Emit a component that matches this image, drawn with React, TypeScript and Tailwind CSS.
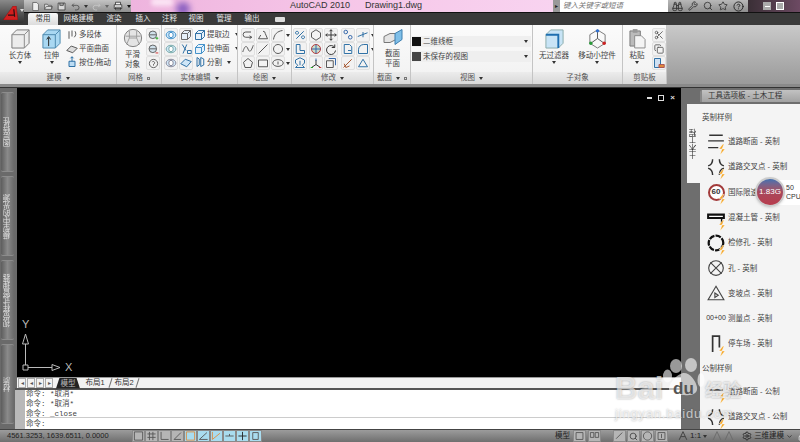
import { ReactNode } from 'react'
import { ChevronDown, Lock, Search, Settings, Star, Wrench, Binoculars, HelpCircle, Scissors, Copy } from 'lucide-react'

// little stroke icon drawn on a 16x16 grid
const G = ({ children, size = 12 }: { children: ReactNode; size?: number }) => (
  <svg width={size} height={size} viewBox="0 0 16 16" fill="none" stroke="#555" strokeWidth="1.3">
    {children}
  </svg>
)

const Caret = ({ className = 'border-t-[#333]' }: { className?: string }) => (
  <span className={`inline-block w-0 h-0 border-x-[2.5px] border-x-transparent border-t-[3px] ${className}`} />
)

// small square ribbon button
const Tool = ({ children, caret }: { children: ReactNode; caret?: boolean }) => (
  <div className="flex items-center h-[14px] gap-[1px]">
    <div className="w-[14px] h-[14px] shrink-0 flex items-center justify-center bg-[#f2f2f2] border border-[#e0e0e0] rounded-[2px]">
      {children}
    </div>
    {caret && <Caret />}
  </div>
)

const Col = ({ children, w }: { children: ReactNode; w?: string }) => (
  <div className={`flex flex-col justify-between py-[3px] shrink-0 ${w ?? ''}`}>{children}</div>
)

const Big = ({ icon, label, w, caret = true }: { icon: ReactNode; label: ReactNode; w: string; caret?: boolean }) => (
  <div className={`flex flex-col items-center pt-[3px] shrink-0 ${w}`}>
    {icon}
    <div className="text-[7.5px] leading-[10px] text-[#444] text-center mt-[2px] whitespace-nowrap">{label}</div>
    {caret && <Caret />}
  </div>
)

const Row = ({ icon, label, caret }: { icon: ReactNode; label: string; caret?: boolean }) => (
  <div className="flex items-center gap-[1px] h-[14px] text-[7.5px] text-[#444] whitespace-nowrap">
    <span className="w-[12px] flex justify-center">{icon}</span>
    {label}
    {caret && <span className="ml-[4px] flex"><Caret /></span>}
  </div>
)

const Panel = ({ w, label, children, arrow = true, launcher, pad = 'px-[2px]' }: { w: string; label: string; children: ReactNode; arrow?: boolean; launcher?: boolean; pad?: string }) => (
  <div className={`flex flex-col border-r border-[#c4c4c4] shrink-0 ${w}`}>
    <div className={`h-[47px] flex overflow-hidden ${pad}`}>{children}</div>
    <div className="h-[12px] flex items-center justify-center gap-[4px] bg-gradient-to-b from-[#ececec] to-[#d9d9d9] text-[7.5px] text-[#555] whitespace-nowrap">
      {label}
      {arrow && <Caret />}
      {launcher && <span className="w-[3px] h-[3px] border border-[#777]" />}
    </div>
  </div>
)

const Ring = ({ c = '#3f8fc9' }: { c?: string }) => (
  <G>
    <ellipse cx="8" cy="8" rx="6.5" ry="5" fill="#cfe6f7" stroke={c} />
    <ellipse cx="8" cy="8" rx="3" ry="3.6" fill="#fff" stroke={c} />
  </G>
)
const Cube = ({ c = '#3f8fc9' }: { c?: string }) => (
  <G>
    <path d="M2 6h8v8H2zM2 6l4-4h8v8l-4 4M10 6l4-4" stroke={c} fill="#e6f1fa" />
  </G>
)
const Shape = ({ d, c }: { d: string; c?: string }) => (
  <G>
    <path d={d} stroke={c ?? '#555'} />
  </G>
)

const Bolt = () => (
  <svg width="8" height="11" viewBox="0 0 8 11" className="absolute right-[-1px] bottom-[-2px]">
    <path d="M5 0 1 5h3L2 11l5-6H4l2-5z" fill="#f5a623" stroke="#fff" strokeWidth="0.4" />
  </svg>
)

const Item = ({ label, icon, bolt = true }: { label: string; icon: ReactNode; bolt?: boolean }) => (
  <div className="h-[25.3px] flex items-center gap-[3px] pl-[7px] shrink-0">
    <div className="relative w-[18px] h-[22px] flex items-center justify-center">
      {icon}
      {bolt && <Bolt />}
    </div>
    <span className="text-[7.5px] text-[#444] whitespace-nowrap">{label}</span>
  </div>
)

const Bar = ({ children, active }: { children: ReactNode; active?: boolean }) => (
  <div className={`w-[13px] h-[12px] shrink-0 flex items-center justify-center border border-[#8a8a8a] ${active ? 'bg-[#a9dcef]' : 'bg-[#b5b5b5]'}`}>
    {children}
  </div>
)

const SideTab = ({ label, h }: { label: string; h: string }) => (
  <div className={`${h} ml-[1px] mr-[3px] mb-[4px] rounded-[2px] border-y border-[#8c8c8c] bg-gradient-to-r from-[#5d5d5d] via-[#8a8a8a] to-[#6a6a6a] flex items-center justify-center shrink-0`}>
    <span className="[writing-mode:vertical-rl] rotate-180 text-[7.5px] leading-none text-[#ddd] whitespace-nowrap">{label}</span>
  </div>
)

const Tab = ({ children, w }: { children: ReactNode; w: string }) => (
  <div className={`${w} text-center text-[7.5px] text-[#e8e8e8] whitespace-nowrap`}>{children}</div>
)

const Slash = () => <span className="w-px h-[10px] bg-[#777] rotate-[18deg]" />

export default function App() {
  return (
    <div className="relative w-[800px] h-[442px] overflow-hidden flex flex-col bg-[#6e6e6e] font-['Liberation_Sans','Noto_Sans_CJK_SC',sans-serif]">
      {/* title bar */}
      <div className="h-[13px] flex border-b border-[#111] shrink-0 text-[9px]">
        <div className="w-[131px] bg-gradient-to-b from-[#c4c4c4] to-[#8f8f8f] flex items-center gap-[4px] pl-[31px]">
          <G size={11}><path d="M3 1h7l3 3v11H3z" fill="#eee" /></G>
          <G size={11}><path d="M1 13V4h5l1 2h6v7zM1 13l3-5h11l-2 5" fill="#ddd" /></G>
          <G size={11}><path d="M2 2h12v12H2zM5 2v4h6V2" fill="#d8d8d8" stroke="#333" /></G>
          <G size={11}><path d="M5 3 2 6l3 3M2 6h8a4 4 0 0 1 0 8H7" stroke="#444" /></G>
          <Caret />
          <G size={11}><path d="M11 3l3 3-3 3M14 6H6a4 4 0 0 0 0 8h3" stroke="#ccc" /></G>
          <Caret className="border-t-[#666]" />
          <G size={12}><path d="M4 6V2h8v4M2 6h12v6H2zM4 10h8v4H4z" fill="#eee" stroke="#333" /></G>
          <Caret className="border-t-[#111]" />
        </div>
        <div className="relative w-[422px] overflow-hidden bg-gradient-to-r from-[#eeb4de] via-[#f6c6e8] to-[#f8d3f0] flex items-center text-[#333] pl-[159px] gap-[15px] whitespace-nowrap">
          <span className="absolute left-[45px] top-[2px] w-[14px] h-[14px] rounded-full bg-[#8a5fc0] blur-[3px]" />
          <span className="absolute left-[20px] top-[-2px] w-[22px] h-[8px] rounded-full bg-[#fbe3f4] blur-[2px]" />
          <span>AutoCAD 2010</span>
          <span>Drawing1.dwg</span>
        </div>
        <div className="w-[7px] bg-[#999] flex items-center justify-center text-[6px] text-[#222]">▸</div>
        <div className="w-[108px] bg-white flex items-center pl-[3px] italic text-[#777] text-[7.5px] whitespace-nowrap">键入关键字或短语</div>
        <div className="w-[80px] bg-gradient-to-b from-[#b8b8b8] to-[#8e8e8e] flex items-center justify-center gap-[5px]">
          <Binoculars size={11} color="#333" />
          <Wrench size={10} color="#333" />
          <Search size={10} color="#333" />
          <Star size={10} color="#333" />
          <HelpCircle size={11} color="#222" />
        </div>
        <div className="flex-1 bg-gradient-to-r from-[#3a2f36] to-[#6d4a63] flex items-center pl-[15px] gap-[5px]">
          <span className="w-[8px] h-[8px] flex items-center justify-center bg-[#aaa]"><span className="w-[5px] h-[1px] bg-white" /></span>
          <span className="w-[8px] h-[8px] bg-[#aaa] border border-white" />
        </div>
      </div>

      {/* ribbon tabs */}
      <div className="h-[12px] bg-[#3a3a3a] flex items-end pl-[28px] shrink-0 leading-[12px]">
        <div className="w-[30px] h-[12px] text-center text-[7.5px] text-[#333] bg-gradient-to-b from-[#f8f8f8] to-[#dcdcdc] rounded-t-[2px]">常用</div>
        <Tab w="w-[39px] ml-[1px]">网格建模</Tab>
        <Tab w="w-[32px]">渲染</Tab>
        <Tab w="w-[26px]">插入</Tab>
        <Tab w="w-[27px]">注释</Tab>
        <Tab w="w-[26px]">视图</Tab>
        <Tab w="w-[30px]">管理</Tab>
        <Tab w="w-[26px]">输出</Tab>
        <div className="ml-[10px] w-[10px] h-[5px] mb-[3px] bg-[#ddd] rounded-[1px]" />
      </div>

      {/* ribbon */}
      <div className="h-[59px] flex shrink-0 bg-gradient-to-b from-[#fbfbfb] to-[#f1f1f1]">
        <Panel w="w-[117px]" label="建模" pad="pl-[3px]">
          <Big w="w-[34px]" label="长方体" icon={
            <svg width="21" height="21" viewBox="0 0 22 22"><path d="M2 7l5-5h13v14l-5 5H2z" fill="#ececec" stroke="#777" /><path d="M2 7h13v14M15 7l5-5" stroke="#888" fill="none" /></svg>
          } />
          <Big w="w-[29px]" label="拉伸" icon={
            <svg width="21" height="21" viewBox="0 0 22 22"><path d="M2 7l5-5h13v14l-5 5H2z" fill="#a9d8f2" stroke="#4a87ad" /><path d="M2 7h13v14M15 7l5-5" stroke="#4a87ad" fill="none" /><path d="M8 19V10M6 12l2-3 2 3" stroke="#222" fill="none" /></svg>
          } />
          <Col>
            <Row icon={<Shape d="M4 3v10M8 2v8M12 3c2 3 1 6-1 8" />} label="多段体" />
            <Row icon={<G><path d="M1 10l6-6 8 3-6 6z" fill="#ddd" /></G>} label="平面曲面" />
            <Row icon={<G><path d="M4 7h8v7H4zM8 7V1M6 3l2-2 2 2" stroke="#2b6ea3" fill="#bcdcf3" /></G>} label="按住/拖动" />
          </Col>
        </Panel>
        <Panel w="w-[45px]" label="网格" arrow={false} launcher>
          <Big w="w-[27px]" caret={false} label={<>平滑<br />对象</>} icon={
            <svg width="20" height="20" viewBox="0 0 22 20"><circle cx="11" cy="10" r="9.5" fill="#e4e4e4" stroke="#777" /><path d="M3 8h16M7 2v8l-3 7M15 2v8l3 7M7 10h8" stroke="#999" fill="none" /></svg>
          } />
          <Col>
            <Tool><G size={11}><circle cx="7" cy="7" r="5.5" fill="#cfe0ea" /><path d="M2 7h10" /><path d="M11 12h4M13 10v4" stroke="#2a2" /></G></Tool>
            <Tool><G size={11}><circle cx="7" cy="7" r="5.5" fill="#cfe0ea" /><path d="M2 7h10" /><path d="M11 13h4" stroke="#c22" /></G></Tool>
            <Tool><G size={11}><circle cx="8" cy="8" r="6" /><path d="M6 6a2 2 0 1 1 2 3v2" /></G></Tool>
          </Col>
        </Panel>
        <Panel w="w-[76px]" label="实体编辑">
          <Col w="w-[15px]"><Tool><Ring /></Tool><Tool><Ring c="#7aa" /></Tool><Tool><Ring c="#889" /></Tool></Col>
          <Col w="w-[15px]">
            <Tool><Cube c="#666" /></Tool>
            <Tool><G><path d="M3 2l5 8M9 2 4 14M10 10h5v4h-5z" stroke="#2b6ea3" /></G></Tool>
            <Tool><G><path d="M1 9l6-6 8 3-6 7z" fill="#cfe6f7" stroke="#2b6ea3" /></G></Tool>
          </Col>
          <Col>
            <Row icon={<Cube c="#2b6ea3" />} label="提取边" caret />
            <Row icon={<Cube />} label="拉伸面" caret />
            <Row icon={<G><path d="M4 2v12M9 2v12M4 2l3 2v8l-3 2M9 2l4 2v8l-4 2" stroke="#2b6ea3" /></G>} label="分割" caret />
          </Col>
        </Panel>
        <Panel w="w-[54px]" label="绘图" pad="pl-[3px]">
          <Col w="w-[15px]">
            <Tool><Shape d="M12 4H5a3 3 0 0 0 0 7h8M10 9l3 2-3 2" /></Tool>
            <Tool><Shape d="M1 12c3-9 5-9 7-4s4 4 7-5" /></Tool>
            <Tool><Shape d="M8 2l6 5-2 7H4L2 7z" /></Tool>
          </Col>
          <Col w="w-[15px]">
            <Tool><Shape d="M8 3a3 3 0 0 1 3 3l3 7H2l3-5" /></Tool>
            <Tool><Shape d="M2 14 14 2" /></Tool>
            <Tool><Shape d="M2 4h12v9H2z" /></Tool>
          </Col>
          <Col>
            <Tool caret><Shape d="M2 14C3 7 7 3 14 2" /></Tool>
            <Tool caret><Shape d="M8 2a6 6 0 1 0 .1 0M8 8h.1" /></Tool>
            <Tool caret><G><ellipse cx="8" cy="8" rx="7" ry="4.5" /><path d="M8 6v4" /></G></Tool>
          </Col>
        </Panel>
        <Panel w="w-[82px]" label="修改" pad="pl-[1px]">
          <Col w="w-[16px]">
            <Tool><Shape d="M13 3 3 13M4 3a2 2 0 1 0 .1 0M12 9a2 2 0 1 0 .1 0" c="#2b6ea3" /></Tool>
            <Tool><Shape d="M3 2h5v8h6v4H3z" c="#2b6ea3" /></Tool>
            <Tool><Shape d="M8 1 14 4v4l-3 3 3 3H2l3-3-3-3V4zM8 5v6" c="#2b6ea3" /></Tool>
          </Col>
          <Col w="w-[15px]">
            <Tool><Shape d="M8 1 14 5v6l-6 4-6-4V5z" /></Tool>
            <Tool><G><circle cx="8" cy="8" r="6" fill="#c9dcc9" stroke="#b33" /><path d="M8 2v12M2 8h12" stroke="#36a" /></G></Tool>
            <Tool><G><path d="M8 4v6L2 14M8 10l6 4" stroke="#333" /><path d="M8 2v3" stroke="#36a" /><path d="M1 14h3" stroke="#2a2" /><path d="M12 14h3" stroke="#c33" /></G></Tool>
          </Col>
          <Col w="w-[17px]">
            <Tool><Shape d="M8 1v14M1 8h14M8 1 6 3M8 1l2 2M8 15l-2-2M8 15l2-2M1 8l2-2M1 8l2 2M15 8l-2-2M15 8l-2 2" c="#333" /></Tool>
            <Tool><Shape d="M13 6a6 6 0 1 0 1 4M13 2v4H9" c="#333" /></Tool>
            <Tool><G><path d="M2 5h9v9H2z" /><path d="M5 2h9v9" stroke="#36a" /></G></Tool>
          </Col>
          <Col w="w-[15px]">
            <Tool><G><circle cx="5" cy="4" r="2.4" stroke="#36a" /><circle cx="11" cy="11" r="2.4" stroke="#36a" /></G></Tool>
            <Tool><Shape d="M3 2h7l3 3v9H3zM8 10h4" c="#2b6ea3" /></Tool>
            <Tool><Shape d="M2 14 13 3M3 9l2 5 5-2" c="#a5562f" /></Tool>
          </Col>
          <Col>
            <Tool caret><Shape d="M1 10 14 5M8 4v7" c="#2b6ea3" /></Tool>
            <Tool caret><Shape d="M2 14V9a7 7 0 0 1 7-7h5v12z" c="#2b6ea3" /></Tool>
            <Tool><Shape d="M2 13 8 3l6 10z" c="#2b6ea3" /></Tool>
          </Col>
        </Panel>
        <Panel w="w-[37px]" label="截面" launcher>
          <Big w="w-[33px]" caret={false} label={<>截面<br />平面</>} icon={
            <svg width="20" height="19" viewBox="0 0 20 18"><path d="M1 8l6-3h6v6l-6 3H1z" fill="#e4e4e4" stroke="#777" /><path d="M12 5l7-4v10l-7 5z" fill="#7fbfe8" stroke="#3d7fb0" /></svg>
          } />
        </Panel>
        <Panel w="w-[122px]" label="视图" pad="px-[1px]">
          <div className="flex flex-col gap-[4px] pt-[11px] w-full">
            <div className="h-[11px] bg-[#efefef] flex items-center gap-[2px] text-[7.5px] text-[#444] pr-[3px]">
              <span className="w-[9px] h-[9px] bg-[#111]" />二维线框<span className="ml-auto flex"><Caret /></span>
            </div>
            <div className="h-[11px] bg-[#efefef] flex items-center gap-[2px] text-[7.5px] text-[#444] pr-[3px]">
              <span className="w-[9px] h-[9px] bg-[#444]" />未保存的视图<span className="ml-auto flex"><Caret /></span>
            </div>
          </div>
        </Panel>
        <Panel w="w-[90px]" label="子对象" arrow={false}>
          <Big w="w-[38px]" label="无过滤器" icon={
            <svg width="21" height="21" viewBox="0 0 22 22"><path d="M2 7l5-5h13v14l-5 5H2z" fill="#c8e4f6" stroke="#8aa" /><path d="M2 7h13v14" stroke="#1f6fb0" strokeWidth="2" fill="none" /></svg>
          } />
          <Big w="w-[48px]" label="移动小控件" icon={
            <svg width="21" height="21" viewBox="0 0 22 22" fill="none"><path d="M11 2 19 7v9l-8 5-8-5V7z" stroke="#777" /><path d="M11 11V2M11 11l-7 5M11 11l7 5" stroke="#555" /><circle cx="11" cy="3" r="1.8" fill="#2f6fd0" /><circle cx="4" cy="16" r="1.8" fill="#2a9a3a" /><circle cx="18" cy="16" r="1.8" fill="#c22" /></svg>
          } />
        </Panel>
        <Panel w="w-[44px]" label="剪贴板" arrow={false}>
          <Big w="w-[24px]" label="粘贴" icon={
            <svg width="17" height="21" viewBox="0 0 18 22"><path d="M1 3h11v16H1z" fill="#bbb" stroke="#777" /><path d="M4 1h5v4H4z" fill="#999" /><path d="M6 8h7l4 4v9H6z" fill="#f4f4f4" stroke="#888" /></svg>
          } />
          <Col w="ml-[3px]">
            <Tool><Scissors size={10} color="#555" /></Tool>
            <Tool><Copy size={10} color="#555" /></Tool>
            <Tool><G><path d="M2 2h8v12H2z" fill="#cfe0f2" stroke="#2b6ea3" /><path d="M8 10h7v4H8z" fill="#e08a3a" stroke="#a55" /></G></Tool>
          </Col>
        </Panel>
        <div className="flex-1 bg-gradient-to-b from-[#c9c9c9] to-[#9a9a9a]" />
      </div>

      {/* grey strip under the ribbon */}
      <div className="h-[4px] shrink-0 bg-[#8a8a8a] border-b border-[#333]" />

      {/* work area */}
      <div className="flex-1 flex min-h-0">
        <div className="w-[17px] shrink-0 pt-[4px] flex flex-col bg-[#6a6a6a]">
          <SideTab h="h-[80px]" label="图层特性" />
          <SideTab h="h-[80px]" label="模型中的光源" />
          <SideTab h="h-[80px]" label="视觉样式管理器" />
          <SideTab h="h-[80px]" label="材质" />
        </div>

        <div className="w-[664px] flex flex-col shrink-0">
          <div className="relative flex-1 bg-black">
            <div className="absolute top-[6px] right-[6px] flex items-center gap-[6px]">
              <span className="w-[5px] h-[2px] bg-[#ddd]" />
              <span className="w-[6px] h-[6px] border border-[#ddd]" />
              <span className="text-[8px] leading-[8px] font-bold text-[#ddd]">×</span>
            </div>
            <svg className="absolute left-[5px] bottom-[3px]" width="56" height="56" viewBox="0 0 56 56" fill="none" stroke="#bbb">
              <path d="M3.500 47V26M0.500 26 3.500 16l3 10zM6 49.500h24M30 46.500l8 3-8 3zM1 47h5v5H1z" />
            </svg>
            <span className="absolute left-[5px] bottom-[47px] text-[11px] leading-none text-[#bbb]">Y</span>
            <span className="absolute left-[48px] bottom-[4px] text-[11px] leading-none text-[#bbb]">X</span>
          </div>

          <div className="h-[11px] shrink-0 bg-[#f2f2f2] flex items-center text-[7.5px] text-[#333] border-t border-[#999]">
            <div className="w-[36px] flex pl-[1px] gap-[1px] text-[6px] leading-[8px] text-[#555]">
              <span className="w-[8px] text-center border border-[#aaa]">◂</span>
              <span className="w-[8px] text-center border border-[#aaa]">◂</span>
              <span className="w-[8px] text-center border border-[#aaa]">▸</span>
              <span className="w-[8px] text-center border border-[#aaa]">▸</span>
            </div>
            <span className="w-[24px] text-center bg-[#222] text-[#bbb] leading-[11px] ml-[3px] [clip-path:polygon(15%_0,85%_0,100%_100%,0_100%)]">模型</span>
            <span className="w-[30px] text-center">布局1</span>
            <Slash />
            <span className="w-[26px] text-center">布局2</span>
            <Slash />
          </div>

          <div className="h-[41px] shrink-0 flex border-t-[2px] border-[#555] bg-white -ml-[2px]">
            <div className="w-[10px] bg-[#b9b9b9]" />
            <div className="flex-1 flex flex-col font-['Liberation_Mono','Noto_Sans_CJK_SC',monospace] text-[7.5px] leading-[10px] text-[#444] pl-[1px]">
              <div className="h-[28px] -mt-[1px] whitespace-pre shrink-0">
                <div>命令: *取消*</div>
                <div>命令: *取消*</div>
                <div>命令: _close</div>
              </div>
              <div className="flex-1 border-t border-[#ccc] flex items-center">命令:</div>
            </div>
          </div>
        </div>

        {/* tool palette */}
        <div className="flex-1 flex flex-col min-w-0 pt-[2px]">
          <div className="h-[12px] ml-[19px] bg-gradient-to-b from-[#c2c2c2] to-[#a2a2a2] rounded-tl-[2px] text-[7.5px] leading-[12px] text-[#333] pl-[6px] whitespace-nowrap border-l-[2px] border-[#888] shrink-0">
            工具选项板 - 土木工程
          </div>
          <div className="flex-1 flex pt-[2px] min-h-0">
            <div className="w-[19px] shrink-0 pl-[6px]">
              <div className="h-[79px] bg-[#f4f4f4] flex items-center justify-center">
                <span className="[writing-mode:vertical-rl] rotate-180 text-[7.5px] leading-none text-[#333]">土木工程</span>
              </div>
            </div>
            <div className="flex-1 bg-[#f4f4f4] overflow-hidden pt-[7px]">
              <div className="text-[7.5px] leading-[13px] text-[#444] pl-[2px] h-[18px]">英制样例</div>
              <Item label="道路断面 - 英制" icon={<G size={18}><path d="M2 2h12M1 7h14M1 13h9" stroke="#333" /></G>} />
              <Item label="道路交叉点 - 英制" icon={<G size={18}><path d="M5 1c0 3-1 5-4 6M11 1c0 3 1 5 4 6M5 15c0-3-1-5-4-6M11 15c0-3 1-5 4-6" stroke="#333" /></G>} />
              <Item label="国际限速 - 英制" icon={
                <div className="w-[17px] h-[17px] rounded-full border-[2px] border-[#a23b3b] bg-white text-[8px] font-bold text-[#333] flex items-center justify-center">60</div>
              } />
              <Item label="混凝土管 - 英制" icon={<G size={18}><path d="M1 5h14v3H1z" fill="#fff" stroke="#111" strokeWidth="1.800" /><path d="M13 8v5" stroke="#111" /></G>} />
              <Item label="检修孔 - 英制" icon={<G size={18}><circle cx="8" cy="8" r="6.500" stroke="#111" strokeWidth="2" strokeDasharray="5 1" /></G>} />
              <Item label="孔 - 英制" bolt={false} icon={<G size={18}><circle cx="8" cy="8" r="6.500" stroke="#444" strokeWidth="1" /><path d="M3 3l10 10M13 3 3 13" stroke="#444" strokeWidth="1" /></G>} />
              <Item label="变坡点 - 英制" bolt={false} icon={<G size={18}><path d="M8 2 15 14H1zM7 8l3 2-3 2z" stroke="#444" strokeWidth="1" /></G>} />
              <Item label="测量点 - 英制" bolt={false} icon={<span className="text-[7px] text-[#333] whitespace-nowrap">00+00</span>} />
              <Item label="停车场 - 英制" icon={<G size={18}><path d="M5 15V1h6v10" stroke="#333" strokeWidth="1.500" /></G>} />
              <div className="text-[7.5px] leading-[13px] text-[#444] pl-[2px] h-[22px] pt-[5px]">公制样例</div>
              <Item label="道路断面 - 公制" icon={<G size={18}><path d="M2 7h12" stroke="#333" /></G>} />
              <Item label="道路交叉点 - 公制" icon={<G size={18}><path d="M5 1c0 3-1 5-4 6M11 1c0 3 1 5 4 6M5 15c0-3-1-5-4-6M11 15c0-3 1-5 4-6" stroke="#333" /></G>} />
            </div>
          </div>
        </div>
      </div>

      {/* status bar */}
      <div className="h-[13px] shrink-0 flex items-center bg-gradient-to-b from-[#9c9c9c] to-[#6f6f6f] border-t border-[#444] text-[7.5px] text-[#222] relative">
        <span className="w-[132px] shrink-0 pl-[7px] whitespace-nowrap">4561.3253, 1639.6511, 0.0000</span>
        <div className="flex shrink-0">
          <Bar><Shape d="M2 2h12v12H2z" /></Bar>
          <Bar><Shape d="M2 5h12M2 10h12M5 2v12M10 2v12" /></Bar>
          <Bar><Shape d="M3 2v11h11" /></Bar>
          <Bar><Shape d="M3 13 13 3M3 13h10" /></Bar>
          <Bar active><Shape d="M2 2h12v12H2z" c="#e08a3a" /></Bar>
          <Bar active><Shape d="M2 13 13 3M2 13h12" /></Bar>
          <Bar active><Shape d="M2 13V2M2 13l11-9" c="#e08a3a" /></Bar>
          <Bar active><Shape d="M2 8h12M8 5v3" /></Bar>
          <Bar active><Shape d="M8 2v12M2 8h12" c="#222" /></Bar>
          <Bar active><Shape d="M4 3h8v10H4z" /></Bar>
        </div>
        <div className="ml-[293px] flex items-center gap-[2px] shrink-0">
          <span className="text-[7.5px] w-[16px] whitespace-nowrap">模型</span>
          <Bar><Shape d="M3 3h10v10H3z" /></Bar>
          <Bar><Shape d="M2 3h5v7H2zM9 3h5v7H9z" /></Bar>
        </div>
        <div className="ml-[12px] flex items-center gap-[1px] shrink-0">
          <Bar><Shape d="M3 12 12 3" /></Bar>
          <Bar><Search size={9} color="#333" /></Bar>
          <Bar><Shape d="M8 2a6 6 0 1 0 .1 0" /></Bar>
          <Bar><Shape d="M3 3h10v10H3zM8 5v6" /></Bar>
        </div>
        <div className="ml-[10px] flex items-center gap-[2px] shrink-0 text-[8px] whitespace-nowrap">
          <G size={10}><path d="M8 1 14 14M8 1 2 14M5 9h6" stroke="#333" /></G>
          1:1 <Caret />
          <span className="ml-[3px] flex"><G size={10}><path d="M8 1 14 14M8 1 2 14" stroke="#666" /></G></span>
          <G size={10}><path d="M8 1 14 14M8 1 2 14" stroke="#666" /></G>
        </div>
        <div className="ml-[8px] flex items-center gap-[2px] shrink-0 whitespace-nowrap">
          <Settings size={10} color="#222" />
          三维建模 <ChevronDown size={7} color="#111" />
          <Lock size={9} color="#eee" className="ml-[3px]" />
        </div>
      </div>

      {/* red application button */}
      <div className="absolute left-0 top-0 w-[24px] h-[23px] bg-gradient-to-b from-[#8a8a8a] to-[#333] rounded-br-[3px] flex items-start pt-[6px] pl-[3px]">
        <svg width="15" height="14" viewBox="0 0 18 17">
          <path d="M0 17 12 0h4l2 17H0z" fill="#d21f1f" stroke="#7a0f0f" strokeWidth="0.5" />
          <path d="M6 11h8M13 4l1 9" stroke="#2a1010" strokeWidth="1.500" fill="none" />
        </svg>
        <span className="ml-[2px] mt-[3px] flex"><Caret className="border-t-[#ddd]" /></span>
      </div>

      {/* CPU meter floating over the palette */}
      <div className="absolute left-[755px] top-[177px] flex items-center">
        <div className="absolute left-[18px] top-[3px] w-[27px] h-[25px] bg-white text-[7px] leading-[9px] text-[#333] pl-[13px] pt-[3px] whitespace-nowrap">
          50<br />CPU
        </div>
        <div className="relative w-[30px] h-[30px] rounded-full border-[2px] border-[#ccc] bg-gradient-to-b from-[#3f6fb0] via-[#a8485c] to-[#b83b4c] flex items-center justify-center text-[8px] text-white shadow">
          1.83G
        </div>
      </div>

      {/* baidu watermark */}
      <div className="absolute left-[615px] top-[374px] text-white/65 [text-shadow:0_0_2px_rgba(0,0,0,0.35)] pointer-events-none select-none">
        <div className="flex items-end h-[30px]">
          <span className="font-bold text-[31px] leading-[30px] w-[90px]">Bai</span>
          <span className="font-bold text-[18px] leading-[26px]">经验</span>
        </div>
        <div className="text-[13px] leading-[16px] tracking-[0.8px] mt-[2px] whitespace-nowrap">jingyan.baidu.com</div>
      </div>
      <svg className="absolute left-[663px] top-[358px]" width="42" height="38" viewBox="0 0 42 38" fill="#fff" fillOpacity="0.6">
        <ellipse cx="13" cy="8" rx="6" ry="7" />
        <ellipse cx="28" cy="7" rx="6" ry="7" />
        <ellipse cx="4.500" cy="18" rx="4.500" ry="6.500" />
        <ellipse cx="38" cy="22" rx="3.500" ry="7" />
        <path d="M21 15c6 0 12 8 13 14s-4 9-13 8-15 0-15-6 9-16 15-16z" />
      </svg>
      <span className="absolute left-[673px] top-[382px] font-bold text-[17px] leading-[14px] text-[#555] pointer-events-none">du</span>
    </div>
  )
}
